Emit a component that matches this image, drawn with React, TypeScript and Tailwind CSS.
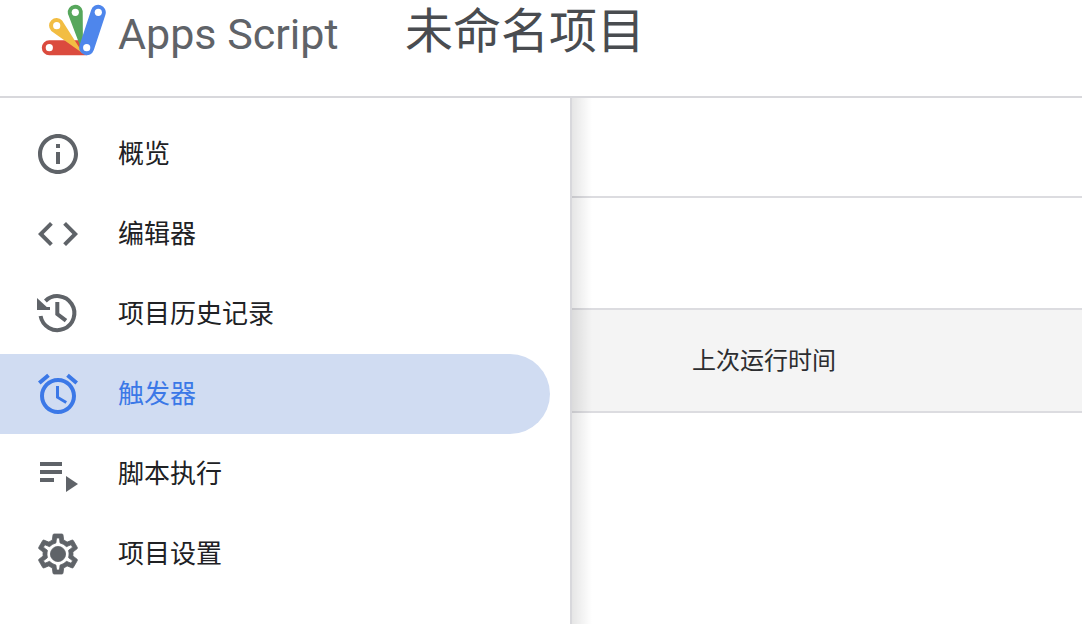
import type { ReactNode } from 'react';

const CJK = 'font-["Roboto","Noto_Sans_CJK_SC",sans-serif]';

function Logo() {
  return (
    <svg width="68" height="56" viewBox="0 0 68 56" className="shrink-0">
      <path d="M9.300 37.200H46.700V52.200H9.300a7.500 7.500 0 0 1 0-15z" fill="#db4b3e" />
      <path d="M22.100 17.500a7.500 7.500 0 1 0-10.800 10.400L43 50.500z" fill="#f2bd42" />
      <path d="M42.700 7.900a7.500 7.500 0 1 0-14.800 2.800L43 50.500z" fill="#57a75c" />
      <path d="M58.300 9.300L46.700 44.700" fill="none" stroke="#4e86ec" strokeWidth="15" strokeLinecap="round" />
      <g fill="#fff">
        <circle cx="9.300" cy="44.700" r="3.600" />
        <circle cx="16.700" cy="22.700" r="3.600" />
        <circle cx="35.300" cy="9.300" r="3.600" />
        <circle cx="58.300" cy="9.300" r="3.600" />
        <circle cx="46.700" cy="44.700" r="3.600" />
      </g>
    </svg>
  );
}

const InfoIcon = () => (
  <svg width="48" height="48" viewBox="0 0 24 24" fill="currentColor">
    <path d="M11 7h2v2h-2zm0 4h2v6h-2zm1-9C6.48 2 2 6.480 2 12s4.480 10 10 10 10-4.480 10-10S17.520 2 12 2zm0 18c-4.410 0-8-3.590-8-8s3.590-8 8-8 8 3.590 8 8-3.590 8-8 8z" />
  </svg>
);

const CodeIcon = () => (
  <svg width="48" height="48" viewBox="0 0 24 24" fill="currentColor">
    <path d="M9.400 16.600L4.800 12l4.600-4.600L8 6l-6 6 6 6 1.400-1.400zm5.200 0l4.600-4.600-4.600-4.600L16 6l6 6-6 6-1.400-1.400z" />
  </svg>
);

const HistoryIcon = () => (
  <svg width="48" height="48" viewBox="0 0 24 24" fill="currentColor">
    <path d="M1.500 4v6H8z" />
    <path d="M1.500 8.500h6.500V10H1.500z" />
    <path d="M5.700 5.500A8.500 8.500 0 1 1 3.300 13" fill="none" stroke="currentColor" strokeWidth="2" />
    <path d="M11.650 6v6L16 15.300" fill="none" stroke="currentColor" strokeWidth="2" />
  </svg>
);

const AlarmIcon = () => (
  <svg width="48" height="48" viewBox="0 0 24 24" fill="currentColor">
    <path d="M22 5.720l-4.600-3.860-1.290 1.530 4.600 3.860L22 5.720zM7.880 3.390L6.600 1.860 2 5.710l1.290 1.530 4.590-3.850zM12.500 8H11v6l4.750 2.850.75-1.230-4-2.370V8zM12 4c-4.970 0-9 4.030-9 9s4.030 9 9 9 9-4.030 9-9-4.030-9-9-9zm0 16c-3.870 0-7-3.130-7-7s3.130-7 7-7 7 3.130 7 7-3.130 7-7 7z" />
  </svg>
);

const ExecIcon = () => (
  <svg width="48" height="48" viewBox="0 0 48 48" fill="currentColor">
    <path d="M6 12h22v4H6zm0 8h22v4H6zm0 8h14v4H6zm26-2v16l12-8z" />
  </svg>
);

const SettingsIcon = () => (
  <svg width="48" height="48" viewBox="0 0 24 24" fill="currentColor" stroke="currentColor" strokeWidth="0.4" strokeLinejoin="round">
    <path d="M19.430 12.980c.04-.32.07-.64.07-.98 0-.34-.03-.66-.07-.98l2.110-1.650c.19-.15.24-.42.12-.64l-2-3.460c-.09-.16-.26-.25-.44-.25-.06 0-.12.01-.17.03l-2.490 1c-.52-.4-1.080-.73-1.690-.98l-.38-2.650C14.460 2.180 14.250 2 14 2h-4c-.25 0-.46.18-.49.42l-.38 2.650c-.61.25-1.170.59-1.690.98l-2.490-1c-.06-.02-.12-.03-.18-.03-.17 0-.34.09-.43.25l-2 3.460c-.13.22-.07.49.12.64l2.110 1.650c-.04.32-.07.65-.07.98 0 .33.03.66.07.98l-2.110 1.650c-.19.15-.24.42-.12.64l2 3.460c.09.16.26.25.44.25.06 0 .12-.01.17-.03l2.490-1c.52.4 1.080.73 1.690.98l.38 2.650c.03.24.24.42.49.42h4c.25 0 .46-.18.49-.42l.38-2.650c.61-.25 1.170-.59 1.690-.98l2.490 1c.06.02.12.03.18.03.17 0 .34-.09.43-.25l2-3.460c.12-.22.07-.49-.12-.64l-2.110-1.650zm-1.980-1.710c.04.31.05.52.05.73 0 .21-.02.43-.05.73l-.14 1.130.89.7 1.080.84-.7 1.210-1.270-.51-1.040-.42-.9.68c-.43.32-.84.56-1.250.73l-1.060.43-.16 1.130-.2 1.350h-1.400l-.19-1.350-.16-1.130-1.060-.43c-.43-.18-.83-.41-1.230-.71l-.91-.7-1.060.43-1.270.51-.7-1.210 1.080-.84.89-.7-.14-1.130c-.03-.31-.05-.54-.05-.74s.02-.43.05-.73l.14-1.130-.89-.7-1.080-.84.7-1.210 1.270.51 1.040.42.9-.68c.43-.32.84-.56 1.250-.73l1.060-.43.16-1.130.2-1.350h1.390l.19 1.350.16 1.130 1.060.43c.43.18.83.41 1.230.71l.91.7 1.060-.43 1.270-.51.7 1.210-1.070.85-.89.7.14 1.130z" />
    <circle cx="12" cy="12" r="3.800" />
  </svg>
);

const NAV: { label: string; icon: ReactNode; active?: boolean }[] = [
  { label: '概览', icon: <InfoIcon /> },
  { label: '编辑器', icon: <CodeIcon /> },
  { label: '项目历史记录', icon: <HistoryIcon /> },
  { label: '触发器', icon: <AlarmIcon />, active: true },
  { label: '脚本执行', icon: <ExecIcon /> },
  { label: '项目设置', icon: <SettingsIcon /> },
];

export default function App() {
  return (
    <div className={`h-[624px] w-[1082px] overflow-hidden bg-white ${CJK}`}>
      {/* Header */}
      <header className="flex h-[98px] items-start border-b-2 border-[#d8d8dc] pl-[40px]">
        <div className="mt-[3px]">
          <Logo />
        </div>
        <span className="ml-[10px] mt-[9px] w-[287px] text-[43px] leading-[50px] text-[#5f6368]">
          Apps Script
        </span>
        <span className="mt-[2px] text-[48px] leading-[60px] text-[#494c50]">未命名项目</span>
      </header>

      <div className="flex h-[526px]">
        {/* Sidebar */}
        <nav className="w-[572px] shrink-0 border-r-2 border-[#d8d8dc] pt-4">
          {NAV.map(item => (
            <div
              key={item.label}
              className={`flex h-20 w-[550px] items-center rounded-r-[40px] pl-[34px] ${
                item.active ? 'bg-[#d0dcf2] text-[#3b78e7]' : 'text-[#202124]'
              }`}
            >
              <span className={item.active ? 'text-[#3b78e7]' : 'text-[#5f6368]'}>{item.icon}</span>
              <span className="ml-[36px] text-[26px] leading-8">{item.label}</span>
            </div>
          ))}
        </nav>

        {/* Content */}
        <main className="relative flex-1">
          <div className="pointer-events-none absolute inset-y-0 left-0 w-5 bg-gradient-to-r from-black/10 to-transparent" />
          <div className="h-[100px] border-b-2 border-[#dcdce0]" />
          <div className="h-[112px] border-b-2 border-[#dcdce0]" />
          <div className="flex h-[103px] items-center border-b-2 border-[#dcdce0] bg-[#f4f4f4] pl-[120px]">
            <span className="text-2xl text-[#2c2d30]">上次运行时间</span>
          </div>
        </main>
      </div>
    </div>
  );
}
